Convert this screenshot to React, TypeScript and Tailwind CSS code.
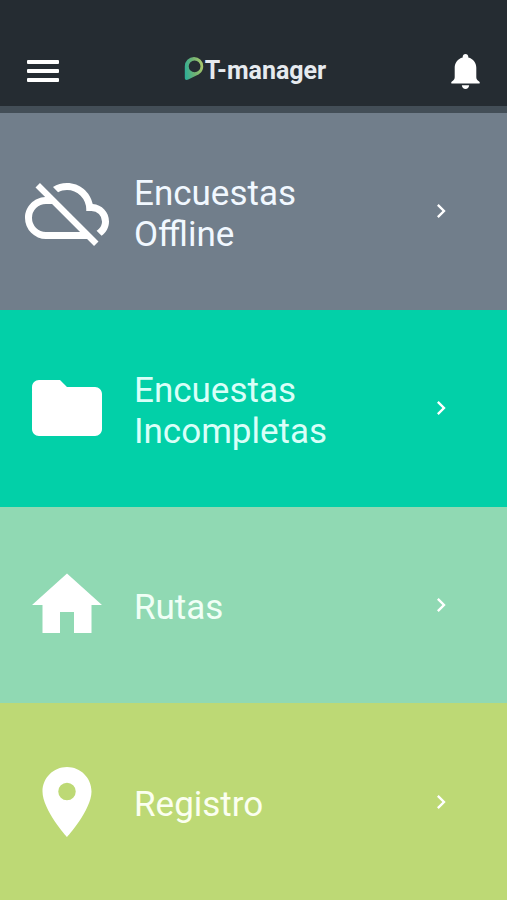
import { MdChevronRight, MdFolder, MdHome, MdPlace } from 'react-icons/md';

function CloudOffIcon({ className }: { className?: string }) {
  return (
    <svg className={className} viewBox="0 0 24 24" fill="currentColor" aria-hidden="true">
      <path d="M7.73 10L15.73 18H6A4 4 0 0 1 2 14A4 4 0 0 1 6 10M3 5.27L5.75 8C2.56 8.15 0 10.77 0 14A6 6 0 0 0 6 20H17.73L19.73 22L21 20.73L4.27 4M19.35 10.03C18.67 6.59 15.64 4 12 4C10.5 4 9.15 4.43 8 5.17L9.45 6.63C10.21 6.23 11.08 6 12 6A5.5 5.5 0 0 1 17.5 11.5V12H19A3 3 0 0 1 22 15C22 16.13 21.36 17.11 20.44 17.62L21.89 19.07C23.16 18.16 24 16.68 24 15C24 12.36 21.95 10.22 19.35 10.03Z" />
    </svg>
  );
}

function BellIcon() {
  return (
    <svg className="w-[29px] h-[35px]" viewBox="0 0 29 35" fill="currentColor" aria-hidden="true">
      <path d="M14.5 0C12.9 0 11.7 1.2 11.7 2.8V3.4C6.8 4.7 3.7 8.8 3.7 13.8V23.2C3.7 25 2.9 26 .9 27.6C0 28.3 0 29.5 .6 29.5H28.4C29 29.5 29 28.3 28.1 27.6C26.1 26 25.3 25 25.3 23.2V13.8C25.3 8.8 22.2 4.7 17.3 3.4V2.8C17.3 1.2 16.1 0 14.5 0Z" />
      <path d="M10.8 31.2H18.2C18 33.6 16.4 35 14.5 35S11 33.6 10.8 31.2Z" />
    </svg>
  );
}

function LogoMark() {
  return (
    <svg className="w-5 h-6 mt-0.5 self-start" viewBox="0 0 20 24" aria-hidden="true">
      <defs>
        <linearGradient id="pin" x1="0" y1="0.6" x2="1" y2="0.4">
          <stop offset="0" stopColor="#2fae96" />
          <stop offset="0.5" stopColor="#6fb274" />
          <stop offset="1" stopColor="#a9c86a" />
        </linearGradient>
      </defs>
      <path
        fill="url(#pin)"
        fillRule="evenodd"
        d="M10 0A9.2 9.2 0 0 1 19.2 9.4C19.2 13.6 16.8 16.2 13.4 18L4.2 22.6C2.2 23.6 .8 22.8 .8 20.8V9.4A9.2 9.2 0 0 1 10 0ZM10.6 3.4A5.9 5.9 0 1 0 10.6 15.2A5.9 5.9 0 0 0 10.6 3.4Z"
      />
    </svg>
  );
}

const items = [
  { label: 'Encuestas Offline', icon: CloudOffIcon, bg: 'bg-[#717e8b]', text: 'text-[#f1f8ff]' },
  { label: 'Encuestas Incompletas', icon: MdFolder, bg: 'bg-[#02d0a8]', text: 'text-[#d9fff8]' },
  { label: 'Rutas', icon: MdHome, bg: 'bg-[#90d9b3]', text: 'text-[#f0fff6]' },
  { label: 'Registro', icon: MdPlace, bg: 'bg-[#bdd975]', text: 'text-[#fbfff0]' },
];

export default function App() {
  return (
    <div className="min-h-screen flex flex-col font-[Roboto,sans-serif] text-white">
      <header className="bg-[#252c32] border-b-[7px] border-[#434e57] pt-[37px] pb-px">
        <div className="h-[68px] px-[27px] flex items-center justify-between">
          <button type="button" aria-label="Menú" className="w-8 flex flex-col gap-[5px]">
            <span className="h-1 rounded-[1px] bg-white" />
            <span className="h-1 rounded-[1px] bg-white" />
            <span className="h-1 rounded-[1px] bg-white" />
          </button>
          <h1 className="flex items-center gap-px text-[25px] leading-8 font-bold text-[#e6eaef]">
            <LogoMark />
            T-manager
          </h1>
          <button type="button" aria-label="Notificaciones">
            <BellIcon />
          </button>
        </div>
      </header>

      <nav className="flex-1 grid auto-rows-fr">
        {items.map(({ label, icon: Icon, bg, text }) => (
          <a key={label} href="#" className={`flex items-center pl-[25px] pr-[52px] ${bg}`}>
            <Icon className="w-[84px] h-[84px] shrink-0" />
            <span className={`ml-[25px] pt-1.5 w-[200px] text-[35px] leading-[41px] ${text}`}>
              {label}
            </span>
            <MdChevronRight className="ml-auto w-7 h-7 shrink-0" />
          </a>
        ))}
      </nav>
    </div>
  );
}
